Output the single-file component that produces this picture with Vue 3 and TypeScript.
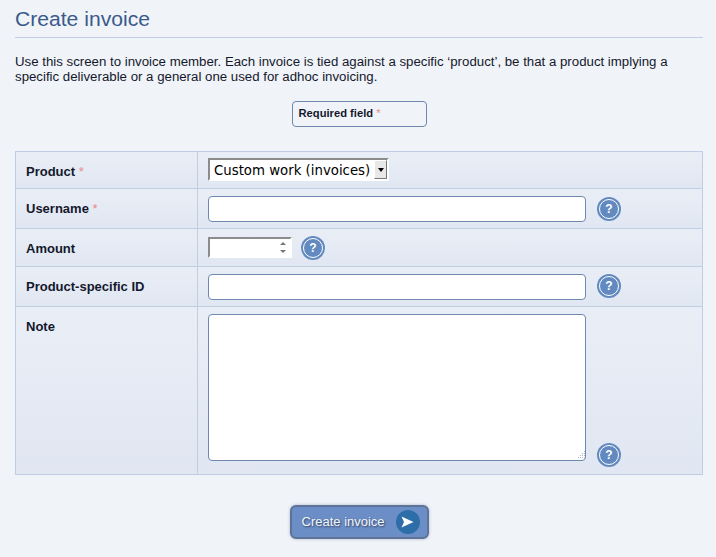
<script setup lang="ts">
interface Row { label: string; required: boolean; kind: 'select' | 'text' | 'number' | 'area'; cls: string }
const rows: Row[] = [
  { label: 'Product', required: true, kind: 'select', cls: 'r1' },
  { label: 'Username', required: true, kind: 'text', cls: 'r2' },
  { label: 'Amount', required: false, kind: 'number', cls: 'r3' },
  { label: 'Product-specific ID', required: false, kind: 'text', cls: 'r4' },
  { label: 'Note', required: false, kind: 'area', cls: 'r5' },
]
</script>

<template>
  <main class="page">
    <h1 class="title">Create invoice</h1>
    <p class="intro">Use this screen to invoice member. Each invoice is tied against a specific ‘product’, be that a product implying a specific deliverable or a general one used for adhoc invoicing.</p>
    <div class="legend-wrap">
      <div class="legend">Required field <span class="star">*</span></div>
    </div>
    <form class="form" @submit.prevent>
      <div v-for="row in rows" :key="row.label" class="row" :class="row.cls">
        <div class="label">{{ row.label }}<span v-if="row.required" class="star req">*</span></div>
        <div class="field">
          <div v-if="row.kind === 'select'" class="select">
            <span class="select-text">Custom work (invoices)</span>
            <span class="select-btn"><i class="down"></i></span>
          </div>
          <input v-else-if="row.kind === 'text'" class="input" type="text" />
          <div v-else-if="row.kind === 'number'" class="number">
            <input class="number-input" type="text" />
            <span class="spin"><i class="up-g"></i><i class="down-g"></i></span>
          </div>
          <div v-else class="area-wrap">
            <textarea class="area"></textarea>
            <svg class="grip" width="10" height="10" viewBox="0 0 10 10">
              <g fill="#b4b8c0">
                <rect x="8" y="1" width="1" height="1" /><rect x="6" y="3" width="1" height="1" /><rect x="8" y="3" width="1" height="1" />
                <rect x="4" y="5" width="1" height="1" /><rect x="6" y="5" width="1" height="1" /><rect x="8" y="5" width="1" height="1" />
                <rect x="2" y="7" width="1" height="1" /><rect x="4" y="7" width="1" height="1" /><rect x="6" y="7" width="1" height="1" /><rect x="8" y="7" width="1" height="1" />
              </g>
            </svg>
          </div>
          <span v-if="row.kind !== 'select'" class="help"><span class="help-ring">?</span></span>
        </div>
      </div>
    </form>
    <div class="actions">
      <button class="submit" type="submit">
        <span class="submit-text">Create invoice</span>
        <span class="submit-icon">
          <svg width="13" height="12" viewBox="0 0 13 12"><path d="M0.5 0.5 L12.5 6 L0.5 11.5 L3 6 Z" fill="#fff" /></svg>
        </span>
      </button>
    </div>
  </main>
</template>

<style>
html, body { margin: 0; background: #f0f3f8; }
</style>

<style scoped>
.page {
  box-sizing: border-box;
  width: 716px;
  height: 557px;
  overflow: hidden;
  padding: 6px 13px 0 15px;
  background: #f0f3f8;
  font-family: "Liberation Sans", Arial, sans-serif;
  color: #14182c;
}
.title {
  margin: 0;
  height: 31px;
  line-height: 25px;
  font-size: 21.12px;
  font-weight: 400;
  color: #3a5a8c;
  border-bottom: 1px solid #c0cee4;
}
.intro {
  margin: 16px 0 0;
  font-size: 13.25px;
  line-height: 15px;
  width: 670px;
}
.legend-wrap {
  display: flex;
  justify-content: center;
  margin-top: 17px;
}
.legend {
  box-sizing: border-box;
  width: 135px;
  height: 26px;
  border: 1px solid #6e88b0;
  border-radius: 4px;
  padding: 5px 6px;
  font-size: 11.2px;
  line-height: 13px;
  font-weight: 700;
}
.legend .star { font-weight: 400; }
.star { color: #e58c8c; }
.req { margin-left: 3.5px; font-weight: 400; }
.form {
  margin-top: 24px;
  border: 1px solid #c0cee4;
}
.row {
  display: grid;
  grid-template-columns: 182px 1fr;
  background: linear-gradient(#e9eef6, #e1e7f2);
  border-bottom: 1px solid #c0cee4;
}
.row:last-child { border-bottom: 0; }
.r1 { height: 36px; }
.r2 { height: 39px; }
.r3 { height: 37px; }
.r4 { height: 39px; }
.r5 { height: 167px; }
.label {
  padding: 12px 0 0 10px;
  font-size: 13px;
  line-height: 15px;
  font-weight: 700;
  border-right: 1px solid #c0cee4;
}
.field {
  display: flex;
  align-items: center;
  padding-left: 10px;
}
.select {
  box-sizing: border-box;
  display: flex;
  align-items: center;
  justify-content: space-between;
  width: 181px;
  height: 23px;
  margin-top: -1px;
  background: #fff;
  border-style: solid;
  border-width: 2px;
  border-color: #8c8c8c #fff #fff #8c8c8c;
  font-family: "DejaVu Sans", sans-serif;
  font-size: 13.3px;
  line-height: 19px;
  color: #000;
  padding-left: 4px;
}
.select-text { white-space: nowrap; padding-top: 1px; }
.select-btn {
  box-sizing: border-box;
  display: flex;
  align-items: center;
  justify-content: center;
  width: 13px;
  height: 19px;
  background: #e8e8e8;
  border-right: 1px solid #777;
  border-bottom: 1px solid #777;
  border-left: 1px solid #fff;
  border-top: 1px solid #fff;
}
.down {
  width: 0;
  height: 0;
  border-left: 3px solid transparent;
  border-right: 3px solid transparent;
  border-top: 4px solid #000;
}
.input {
  box-sizing: border-box;
  width: 378px;
  height: 26px;
  background: #fff;
  border: 1px solid #6e88b0;
  border-radius: 4px;
  padding: 2px 4px;
  outline: none;
}
.number {
  position: relative;
  width: 84px;
  height: 21px;
}
.number-input {
  box-sizing: border-box;
  display: block;
  width: 100%;
  height: 100%;
  background: #fff;
  border-style: solid;
  border-width: 2px;
  border-color: #8c8c8c #fff #fff #8c8c8c;
  padding: 0 2px;
  outline: none;
}
.spin {
  position: absolute;
  top: 5px;
  right: 6px;
  display: flex;
  flex-direction: column;
  gap: 5px;
}
.up-g, .down-g {
  width: 0;
  height: 0;
  border-left: 3px solid transparent;
  border-right: 3px solid transparent;
}
.up-g { border-bottom: 3px solid #777; }
.down-g { border-top: 3px solid #777; }
.area-wrap {
  position: relative;
  width: 378px;
  height: 147px;
  align-self: flex-start;
  margin-top: 7px;
}
.area {
  box-sizing: border-box;
  display: block;
  width: 100%;
  height: 100%;
  background: #fff;
  border: 1px solid #6e88b0;
  border-radius: 4px;
  resize: none;
  outline: none;
}
.grip {
  position: absolute;
  right: 0;
  bottom: 1px;
}
.help {
  box-sizing: border-box;
  width: 24px;
  height: 24px;
  margin-left: 11px;
  border-radius: 50%;
  background: #628ac0;
  padding: 2px;
  flex: none;
}
.help-ring {
  box-sizing: border-box;
  display: block;
  width: 20px;
  height: 20px;
  border: 1px solid #fff;
  border-radius: 50%;
  color: #fff;
  font-size: 12px;
  font-weight: 700;
  line-height: 18px;
  text-align: center;
}
.number + .help { margin-left: 10px; margin-left: 9px; }
.r4 .help { margin-top: -1px; }
.r5 .help { align-self: flex-end; margin-bottom: 7px; }
.actions {
  display: flex;
  justify-content: center;
  margin-top: 30px;
}
.submit {
  box-sizing: border-box;
  display: flex;
  align-items: center;
  justify-content: space-between;
  width: 139px;
  height: 34px;
  padding: 0 7px 0 10px;
  background: #6c8ec6;
  border: 2px solid #5e7398;
  border-radius: 6px;
  box-shadow: 0 0 3px rgba(94, 115, 152, 0.5);
  font-family: "Liberation Sans", Arial, sans-serif;
  font-size: 13px;
  color: #f2f5fa;
  text-shadow: 1px 1px 2px #2c3c5c;
}
.submit-text { position: relative; top: -1px; }
.submit-icon {
  display: flex;
  align-items: center;
  justify-content: center;
  width: 24px;
  height: 24px;
  border-radius: 50%;
  background: #2e6ea8;
}
</style>
